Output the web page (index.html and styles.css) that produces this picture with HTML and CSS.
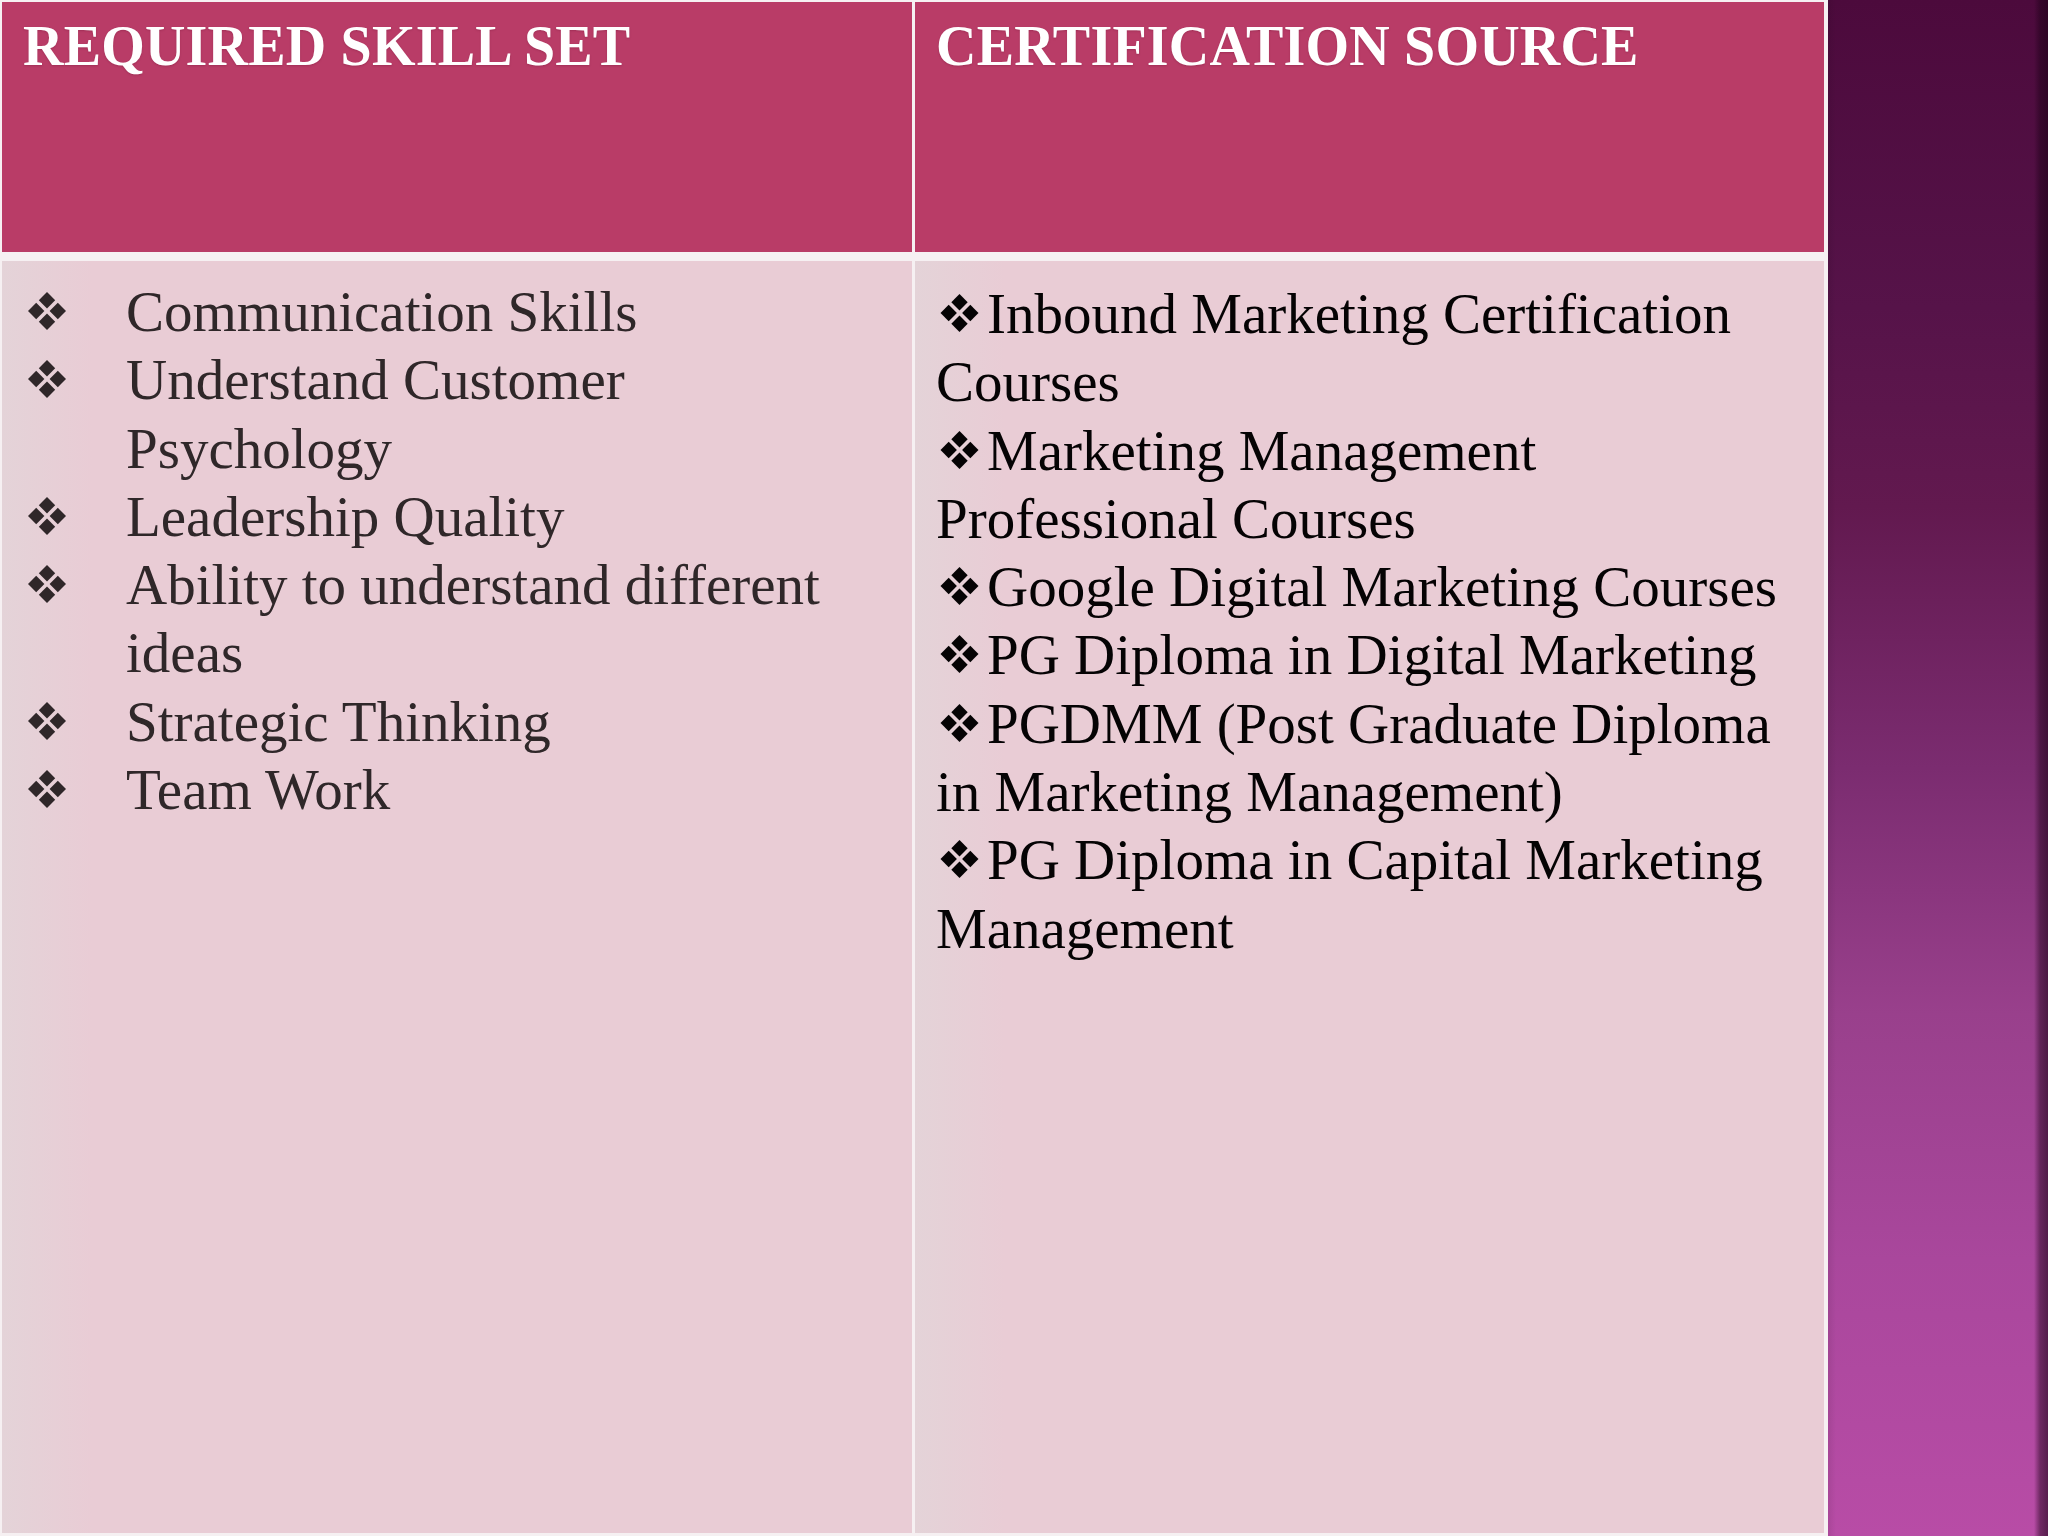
FILE: index.html
```html
<!DOCTYPE html>
<html lang="en">
<head>
<meta charset="utf-8">
<title>Skill set and certification</title>
<link rel="stylesheet" href="styles.css">
</head>
<body>
<svg class="defs" width="0" height="0" aria-hidden="true">
  <symbol id="dia" viewBox="0 0 40 40">
    <polygon points="20,1 28.2,9.2 20,17.4 11.8,9.2"/>
    <polygon points="1,20 9.2,11.8 17.4,20 9.2,28.2"/>
    <polygon points="22.6,20 30.8,11.8 39,20 30.8,28.2"/>
    <polygon points="20,22.6 28.2,30.8 20,39 11.8,30.8"/>
  </symbol>
</svg>
<div class="slide">
  <div class="table">
    <div class="cell head"><h2 class="head-title">REQUIRED SKILL SET</h2></div>
    <div class="cell head"><h2 class="head-title">CERTIFICATION SOURCE</h2></div>
    <div class="cell body skills">
      <ul class="skill-list">
        <li><span class="mark"><svg class="bullet"><use href="#dia"/></svg></span><span class="txt">Communication Skills</span></li>
        <li><span class="mark"><svg class="bullet"><use href="#dia"/></svg></span><span class="txt">Understand Customer Psychology</span></li>
        <li><span class="mark"><svg class="bullet"><use href="#dia"/></svg></span><span class="txt">Leadership Quality</span></li>
        <li><span class="mark"><svg class="bullet"><use href="#dia"/></svg></span><span class="txt">Ability to understand different ideas</span></li>
        <li><span class="mark"><svg class="bullet"><use href="#dia"/></svg></span><span class="txt">Strategic Thinking</span></li>
        <li><span class="mark"><svg class="bullet"><use href="#dia"/></svg></span><span class="txt">Team Work</span></li>
      </ul>
    </div>
    <div class="cell body certs">
      <p class="cert"><svg class="bullet inline"><use href="#dia"/></svg>Inbound Marketing Certification Courses</p>
      <p class="cert"><svg class="bullet inline"><use href="#dia"/></svg>Marketing Management Professional Courses</p>
      <p class="cert"><svg class="bullet inline"><use href="#dia"/></svg>Google Digital Marketing Courses</p>
      <p class="cert"><svg class="bullet inline"><use href="#dia"/></svg>PG Diploma in Digital Marketing</p>
      <p class="cert"><svg class="bullet inline"><use href="#dia"/></svg>PGDMM (Post Graduate Diploma in Marketing Management)</p>
      <p class="cert"><svg class="bullet inline"><use href="#dia"/></svg>PG Diploma in Capital Marketing Management</p>
    </div>
  </div>
  <div class="side"></div>
</div>
</body>
</html>
```

FILE: styles.css
```css
html, body {
  margin: 0;
  padding: 0;
}
body {
  width: 2048px;
  height: 1536px;
  overflow: hidden;
  font-family: "Liberation Serif", "Times New Roman", serif;
}
.defs {
  position: absolute;
  width: 0;
  height: 0;
}
.slide {
  display: flex;
  width: 2048px;
  height: 1536px;
}
.table {
  box-sizing: border-box;
  width: 1828px;
  height: 1536px;
  padding: 2px 4px 3px 2px;
  background: #f6f0f2;
  display: grid;
  grid-template-columns: 910px 909px;
  grid-template-rows: 250px 1fr;
  column-gap: 3px;
  row-gap: 9px;
}
.cell {
  box-sizing: border-box;
  min-height: 0;
}
.head {
  background: #b93c67;
  padding: 11px 20px 0 21px;
}
.head-title {
  margin: 0;
  font-size: 56px;
  line-height: 67px;
  font-weight: bold;
  color: #ffffff;
  letter-spacing: 0.2px;
  text-shadow: 0 1px 2px rgba(90, 10, 40, 0.25);
}
.body {
  background: linear-gradient(to right, #e4d3d8 0px, #e9ccd5 90px, #e9ccd5 100%);
  font-size: 57px;
  line-height: 68.3px;
}
.skills {
  padding: 17px 30px 0 25px;
  color: #2f2729;
}
.skill-list {
  list-style: none;
  margin: 0;
  padding: 0;
}
.skill-list li {
  display: flex;
  align-items: baseline;
}
.mark {
  flex: 0 0 99px;
}
.txt {
  flex: 1 1 auto;
}
.bullet {
  width: 40px;
  height: 40px;
  fill: currentColor;
  vertical-align: 0;
}
.certs {
  padding: 19px 24px 0 21px;
  color: #050304;
}
.cert {
  margin: 0;
}
.bullet.inline {
  width: 41px;
  margin-left: 3px;
  margin-right: 7px;
}
.side {
  flex: 1 1 auto;
  height: 1536px;
  background:
    linear-gradient(to right, rgba(0,0,0,0.08) 0px, rgba(0,0,0,0) 8px, rgba(0,0,0,0) 206px, rgba(25,0,20,0.45) 212px, rgba(25,0,20,0.6) 220px),
    linear-gradient(to bottom, #4c0a3c 0%, #561349 20%, #62194f 33%, #7b2c70 50%, #99408c 66%, #a9479c 82%, #b84ca6 100%);
}
```
